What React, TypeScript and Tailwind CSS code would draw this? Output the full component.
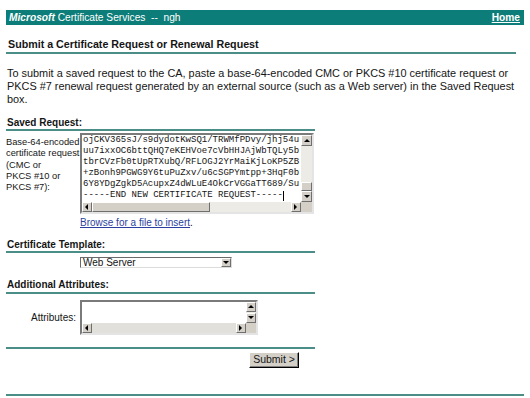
import { ReactElement } from "react";

const TEAL_BAR = "bg-[#0d7d79]";

function Tri({ dir }: { dir: "up" | "down" | "left" | "right" }): ReactElement {
  const pts = {
    up: "1,5 4,2 7,5",
    down: "1,2 4,5 7,2",
    left: "5,1 2,4 5,7",
    right: "2,1 5,4 2,7",
  }[dir];
  return (
    <svg width="8" height="8" viewBox="0 0 8 8">
      <polygon points={pts} fill="#000" />
    </svg>
  );
}

function ScrollBtn({ dir, size = 10 }: { dir: "up" | "down" | "left" | "right"; size?: number }): ReactElement {
  return (
    <div
      className={`flex items-center justify-center bg-[#d4d0c8] border border-t-white border-l-white border-b-[#6f6f6f] border-r-[#6f6f6f] ${
        size === 10 ? "w-[11px] h-[11px]" : "w-[10px] h-[10px]"
      }`}
    >
      <Tri dir={dir} />
    </div>
  );
}

function Line({ wide }: { wide?: boolean }): ReactElement {
  return <div className={`h-[2px] bg-[#4a8e87] ${wide ? "w-[518px]" : "w-[309px]"}`} />;
}

const requestLines = [
  "ojCKV365sJ/s9dydotKwSQ1/TRWMfPDvy/jhj54u",
  "uu7ixxOC6bttQHQ7eKEHVoe7cVbHHJAjWbTQLy5b",
  "tbrCVzFb0tUpRTXubQ/RFLOGJ2YrMaiKjLoKP5ZB",
  "+zBonh9PGWG9Y6tuPuZxv/u6cSGPYmtpp+3HqF0b",
  "6Y8YDgZgkD5AcupxZ4dWLuE4OkCrVGGaTT689/Su",
];

export default function App(): ReactElement {
  return (
    <div className="w-[530px] h-[398px] bg-white overflow-hidden px-[6px] pt-[10px] font-['Liberation_Sans',Arial,sans-serif] text-[#151515]">
      <div className={`${TEAL_BAR} w-[518px] h-[15px] flex items-center justify-between pl-[3px] pr-[4px] text-white text-[10.2px]`}>
        <span>
          <span className="font-bold italic">Microsoft</span> Certificate Services &nbsp;--&nbsp; ngh
        </span>
        <span className="font-bold underline">Home</span>
      </div>

      <div className="mt-[12px] w-[510px] border-b-2 border-[#4a8e87] pl-[2px] text-[10.7px] leading-[15px] font-bold">
        Submit a Certificate Request or Renewal Request
      </div>

      <p className="mt-[13px] w-[510px] pl-[1px] text-[10.9px] leading-[13px]">
        To submit a saved request to the CA, paste a base-64-encoded CMC or PKCS #10 certificate request or PKCS #7 renewal
        request generated by an external source (such as a Web server) in the Saved Request box.
      </p>

      <div className="mt-[10px] w-[309px] pl-[1px] text-[10px] leading-[13px] font-bold">Saved Request:</div>
      <Line />

      <div className="mt-[2px] flex">
        <div className="w-[74px] pt-[4px] text-[9.3px] leading-[11.3px] whitespace-nowrap">
          Base-64-encoded
          <br />
          certificate request
          <br />
          (CMC or
          <br />
          PKCS #10 or
          <br />
          PKCS #7):
        </div>
        <div className="w-[234px] h-[81px] border-2 border-t-[#7a7a7a] border-l-[#7a7a7a] border-b-[#e4e4e4] border-r-[#e4e4e4] flex flex-col">
          <div className="flex flex-1 min-h-0">
            <div className="flex-1 overflow-hidden pl-[1px] font-['Liberation_Mono','Courier_New',monospace] text-[9px] leading-[11.1px] whitespace-nowrap">
              {requestLines.map((l) => (
                <div key={l}>{l}</div>
              ))}
              <div className="flex items-center">
                -----END NEW CERTIFICATE REQUEST-----
                <span className="inline-block w-[1px] h-[10px] bg-black" />
              </div>
            </div>
            <div className="w-[11px] flex flex-col bg-[#ecebe6]">
              <ScrollBtn dir="up" />
              <div className="flex-1 flex flex-col justify-end">
                <div className="h-[9px] bg-[#d4d0c8] border border-t-white border-l-white border-b-[#6f6f6f] border-r-[#6f6f6f]" />
              </div>
              <ScrollBtn dir="down" />
            </div>
          </div>
          <div className="h-[10px] flex">
            <div className="flex-1 flex bg-[#ecebe6]">
              <ScrollBtn dir="left" size={9} />
              <div className="w-[118px] bg-[#d4d0c8] border border-t-white border-l-white border-b-[#6f6f6f] border-r-[#6f6f6f]" />
              <div className="flex-1" />
              <ScrollBtn dir="right" size={9} />
            </div>
            <div className="w-[11px] bg-[#d4d0c8]" />
          </div>
        </div>
      </div>

      <div className="mt-[3px] ml-[74px] text-[10px] leading-[12px]">
        <span className="text-[#2b3f9e] underline">Browse for a file to insert</span>.
      </div>

      <div className="mt-[9px] w-[309px] pl-[1px] text-[10px] leading-[13px] font-bold">Certificate Template:</div>
      <Line />

      <div className="mt-[4px] ml-[74px] w-[152px] h-[11px] border border-t-[#6a6a6a] border-l-[#6a6a6a] border-b-[#dcdcdc] border-r-[#dcdcdc] flex items-center">
        <div className="flex-1 pl-[2px] text-[10px] leading-[10px]">Web Server</div>
        <div className="w-[10px] h-[9px] flex items-center justify-center bg-[#d4d0c8] border border-t-white border-l-white border-b-[#6f6f6f] border-r-[#6f6f6f]">
          <Tri dir="down" />
        </div>
      </div>

      <div className="mt-[10px] w-[309px] pl-[1px] text-[10px] leading-[14px] font-bold">Additional Attributes:</div>
      <Line />

      <div className="mt-[6px] flex items-center">
        <div className="w-[74px] pr-[4px] text-right text-[10px]">Attributes:</div>
        <div className="w-[178px] h-[35px] border-2 border-t-[#7a7a7a] border-l-[#7a7a7a] border-b-[#e4e4e4] border-r-[#e4e4e4] flex flex-col">
          <div className="flex flex-1 min-h-0">
            <div className="flex-1 bg-white" />
            <div className="w-[10px] flex flex-col bg-[#ecebe6]">
              <ScrollBtn dir="up" size={9} />
              <div className="flex-1" />
              <ScrollBtn dir="down" size={9} />
            </div>
          </div>
          <div className="h-[10px] flex">
            <div className="flex-1 flex bg-[#e2e0da]">
              <ScrollBtn dir="left" size={9} />
              <div className="flex-1" />
              <ScrollBtn dir="right" size={9} />
            </div>
            <div className="w-[10px] bg-[#d4d0c8]" />
          </div>
        </div>
      </div>

      <div className="mt-[12px]">
        <Line />
      </div>

      <div className="mt-[3px] ml-[243px] w-[50px] h-[16px] flex items-center justify-center bg-[#d4d0c8] border border-t-white border-l-white border-b-black border-r-black shadow-[inset_-1px_-1px_0_#808080] text-[10.5px]">
        Submit &gt;
      </div>

      <div className="mt-[26px]">
        <Line wide />
      </div>
    </div>
  );
}
